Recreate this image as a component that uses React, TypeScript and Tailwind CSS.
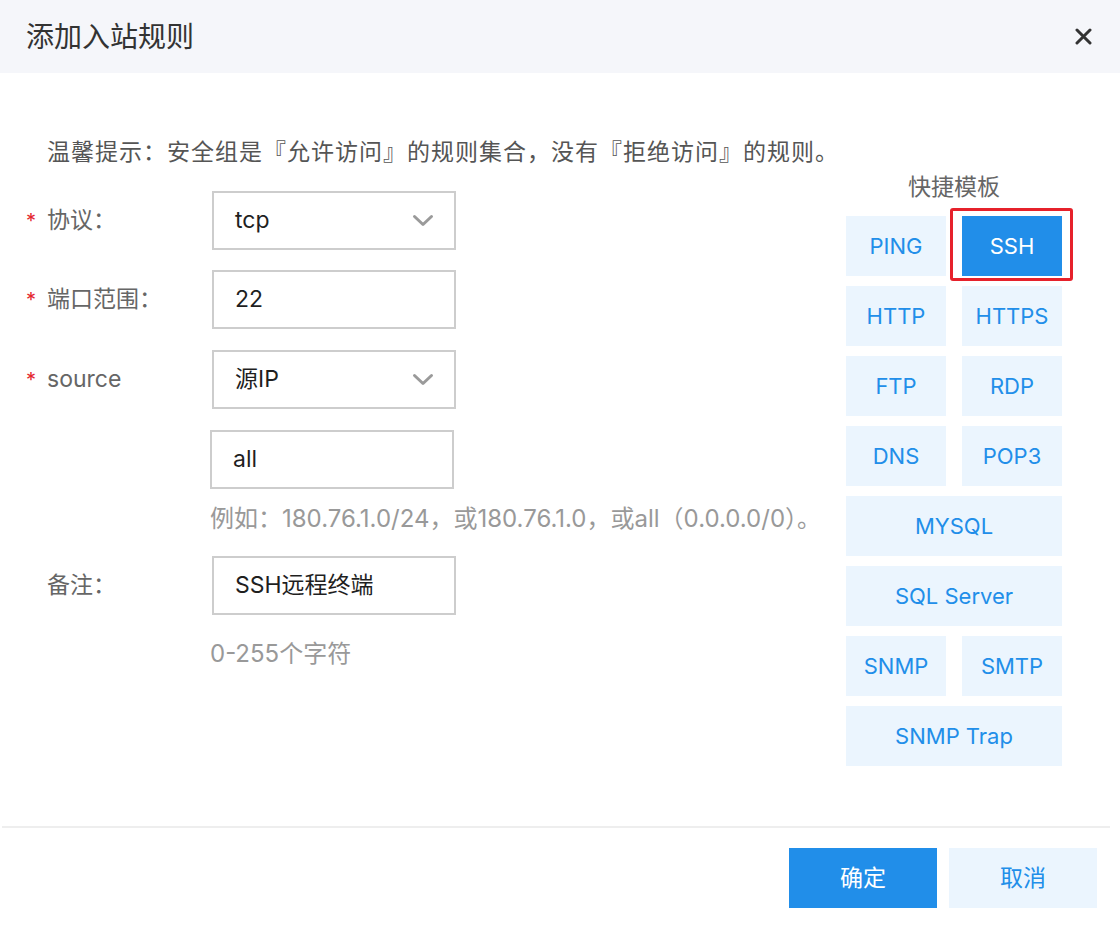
import type { ReactNode } from 'react';

const FONT = { fontFamily: 'Inter, "Noto Sans CJK SC", sans-serif' };

function Chevron() {
  return (
    <svg className="w-[22px] h-[14px]" viewBox="0 0 22 14" fill="none" stroke="#9a9a9a" strokeWidth={3} strokeLinecap="round" strokeLinejoin="round">
      <path d="M2.5 2.5 L11 10.5 L19.5 2.5" />
    </svg>
  );
}

function FormRow({ label, required, children }: { label: string; required?: boolean; children: ReactNode }) {
  return (
    <div className="flex items-center">
      <div className="w-[186px] flex items-center text-[23px] text-[#666]">
        <span className="w-[21px] text-[#e4262f] text-[20px] leading-none">{required ? '*' : ''}</span>
        <span>{label}</span>
      </div>
      {children}
    </div>
  );
}

function Box({ value, select }: { value: string; select?: boolean }) {
  return (
    <div className="w-[244px] h-[59px] border-2 border-[#cdcdcd] flex items-center justify-between pl-[21px] pr-[20px] text-[23px] text-[#1f1f1f]">
      <span>{value}</span>
      {select && <Chevron />}
    </div>
  );
}

function Tpl({ name, wide, active }: { name: string; wide?: boolean; active?: boolean }) {
  return (
    <div
      className={`relative h-[60px] flex items-center justify-center text-[22px] ${wide ? 'col-span-2' : ''} ${
        active ? 'bg-[#218ee9] text-white' : 'bg-[#ebf5fe] text-[#218ee9]'
      }`}
    >
      {name}
      {active && <span className="absolute -left-[12px] -right-[11px] -top-[8px] -bottom-[5px] border-[3px] border-[#e6212b] rounded-[3px]" />}
    </div>
  );
}

export default function App() {
  return (
    <div className="w-[1120px] h-[930px] bg-white flex flex-col" style={FONT}>
      {/* header */}
      <div className="h-[73px] bg-[#f5f6fa] flex items-center justify-between pl-[26px] pr-[28px]">
        <h2 className="text-[28px] text-[#333]">添加入站规则</h2>
        <svg className="w-[17px] h-[17px]" viewBox="0 0 17 17" stroke="#333" strokeWidth={3} strokeLinecap="round">
          <path d="M2 2 L15 15 M15 2 L2 15" />
        </svg>
      </div>

      {/* body */}
      <div className="h-[753px] pt-[64px]">
        <p className="pl-[47px] text-[23px] tracking-[1px] leading-[30px] text-[#555] whitespace-nowrap">
          温馨提示：安全组是『允许访问』的规则集合，没有『拒绝访问』的规则。
        </p>

        <div className="flex mt-[5px]">
          <div className="w-[820px] pl-[26px] pt-[19px]">
            <FormRow label="协议：" required>
              <Box value="tcp" select />
            </FormRow>
            <div className="mt-[20px]">
              <FormRow label="端口范围：" required>
                <Box value="22" />
              </FormRow>
            </div>
            <div className="mt-[21px]">
              <FormRow label="source" required>
                <Box value="源IP" select />
              </FormRow>
            </div>
            <div className="mt-[21px] pl-[184px]">
              <Box value="all" />
            </div>
            <p className="mt-[15px] pl-[184px] text-[24px] leading-[30px] text-[#999] whitespace-nowrap">
              例如：180.76.1.0/24，或180.76.1.0，或all（0.0.0.0/0）。
            </p>
            <div className="mt-[22px]">
              <FormRow label="备注：">
                <Box value="SSH远程终端" />
              </FormRow>
            </div>
            <p className="mt-[24px] pl-[184px] text-[24px] leading-[30px] text-[#999]">0-255个字符</p>
          </div>

          <div className="ml-[26px] w-[216px]">
            <div className="text-center text-[23px] leading-[30px] text-[#666]">快捷模板</div>
            <div className="mt-[14px] grid grid-cols-2 gap-x-[16px] gap-y-[10px]">
              <Tpl name="PING" />
              <Tpl name="SSH" active />
              <Tpl name="HTTP" />
              <Tpl name="HTTPS" />
              <Tpl name="FTP" />
              <Tpl name="RDP" />
              <Tpl name="DNS" />
              <Tpl name="POP3" />
              <Tpl name="MYSQL" wide />
              <Tpl name="SQL Server" wide />
              <Tpl name="SNMP" />
              <Tpl name="SMTP" />
              <Tpl name="SNMP Trap" wide />
            </div>
          </div>
        </div>
      </div>

      {/* footer */}
      <div className="h-[2px] bg-[#eeeeee] ml-[2px] mr-[10px]" />
      <div className="flex justify-end gap-[12px] pt-[20px] pr-[23px]">
        <button className="w-[148px] h-[60px] bg-[#218ee9] text-white text-[23px]">确定</button>
        <button className="w-[148px] h-[60px] bg-[#ebf5fe] text-[#218ee9] text-[23px]">取消</button>
      </div>
    </div>
  );
}
